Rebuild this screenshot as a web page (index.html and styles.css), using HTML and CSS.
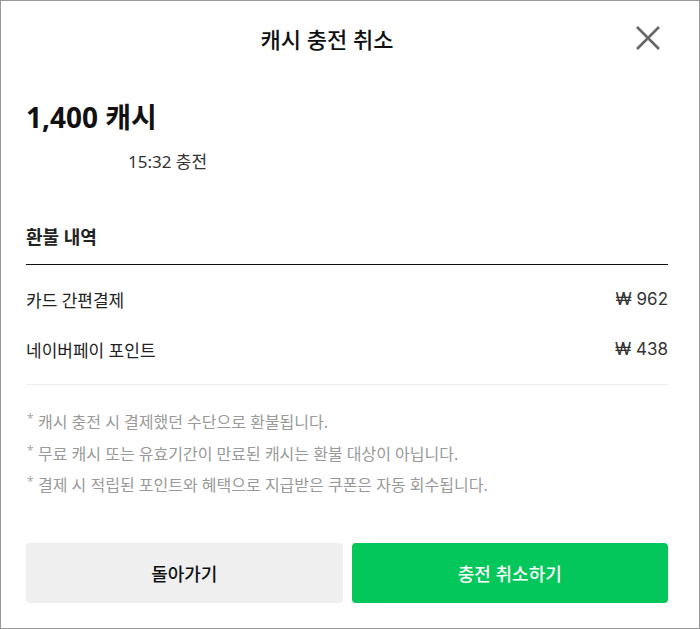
FILE: index.html
```html
<!doctype html>
<html lang="ko">

<head>
	<meta charset="utf-8">
	<title>캐시 충전 취소</title>
	<link rel="stylesheet" href="styles.css">
</head>

<body>

	<div class="modal">
		<div class="modal-header">
			<h1 class="modal-title">캐시 충전 취소</h1>
			<button class="close-btn" aria-label="닫기">
				<svg width="24" height="24" viewBox="0 0 24 24">
					<path d="M1 1 L23 23 M23 1 L1 23" stroke="#666" stroke-width="2.6" fill="none" />
				</svg>
			</button>
		</div>

		<div class="modal-body">
			<div class="amount">1,400 캐시</div>
			<div class="charge-date">15:32 충전</div>

			<h2 class="section-title">환불 내역</h2>
			<ul class="refund-list">
				<li class="refund-row"><span>카드 간편결제</span><span class="price">₩ 962</span></li>
				<li class="refund-row"><span>네이버페이 포인트</span><span class="price">₩ 438</span></li>
			</ul>

			<ul class="notes">
				<li>캐시 충전 시 결제했던 수단으로 환불됩니다.</li>
				<li>무료 캐시 또는 유효기간이 만료된 캐시는 환불 대상이 아닙니다.</li>
				<li>결제 시 적립된 포인트와 혜택으로 지급받은 쿠폰은 자동 회수됩니다.</li>
			</ul>

			<div class="actions">
				<button class="btn btn-back">돌아가기</button>
				<button class="btn btn-confirm">충전 취소하기</button>
			</div>
		</div>
	</div>

</body>
</html>
```

FILE: styles.css
```css
* {
	box-sizing: border-box;
}

body {
	margin: 0;
	font-family: "Noto Sans", "Noto Sans CJK KR", sans-serif;
	color: #222;
	background: #fff;
}

.modal {
	width: 700px;
	height: 629px;
	border: 1px solid #999;
	padding: 0 31px 0 25px;
}

.modal-header {
	display: flex;
	align-items: center;
	height: 74px;
}

.modal-title {
	flex: 1;
	margin: 0;
	text-align: center;
	font-size: 22px;
	font-weight: 500;
	color: #111;
}

.close-btn {
	width: 40px;
	height: 40px;
	padding: 0;
	border: none;
	background: none;
	display: flex;
	align-items: center;
	justify-content: center;
}

.amount {
	margin-top: 24px;
	font-size: 28px;
	font-weight: 700;
	line-height: 36px;
	color: #111;
}

.charge-date {
	margin-top: 15px;
	padding-left: 102px;
	font-size: 17px;
	line-height: 24px;
	color: #333;
}

.section-title {
	margin: 50px 0 0;
	font-size: 18px;
	font-weight: 700;
	line-height: 26px;
	padding-bottom: 14px;
	border-bottom: 1px solid #111;
}

.refund-list {
	list-style: none;
	margin: 0;
	padding: 9px 0 10px;
	border-bottom: 1px solid #eee;
}

.refund-row {
	display: flex;
	justify-content: space-between;
	align-items: center;
	height: 50px;
	font-size: 17px;
	color: #222;
}

.price {
	font-family: Inter, "Noto Sans", sans-serif;
	font-size: 17px;
	color: #333;
}

.notes {
	list-style: none;
	margin: 22px 0 0;
	padding: 0;
	font-size: 16px;
	line-height: 31.5px;
	color: #999;
}

.notes li {
	position: relative;
	padding-left: 12px;
}

.notes li::before {
	content: "*";
	position: absolute;
	left: 1px;
	top: -4px;
	font-size: 12px;
	color: #aaa;
}

.actions {
	display: flex;
	gap: 9px;
	margin-top: 41px;
}

.btn {
	flex: 1;
	height: 60px;
	border: none;
	border-radius: 4px;
	font-family: inherit;
	font-size: 18px;
	font-weight: 500;
}

.btn-back {
	background: #efefef;
	color: #111;
}

.btn-confirm {
	background: #03c75a;
	color: #fff;
}
```
